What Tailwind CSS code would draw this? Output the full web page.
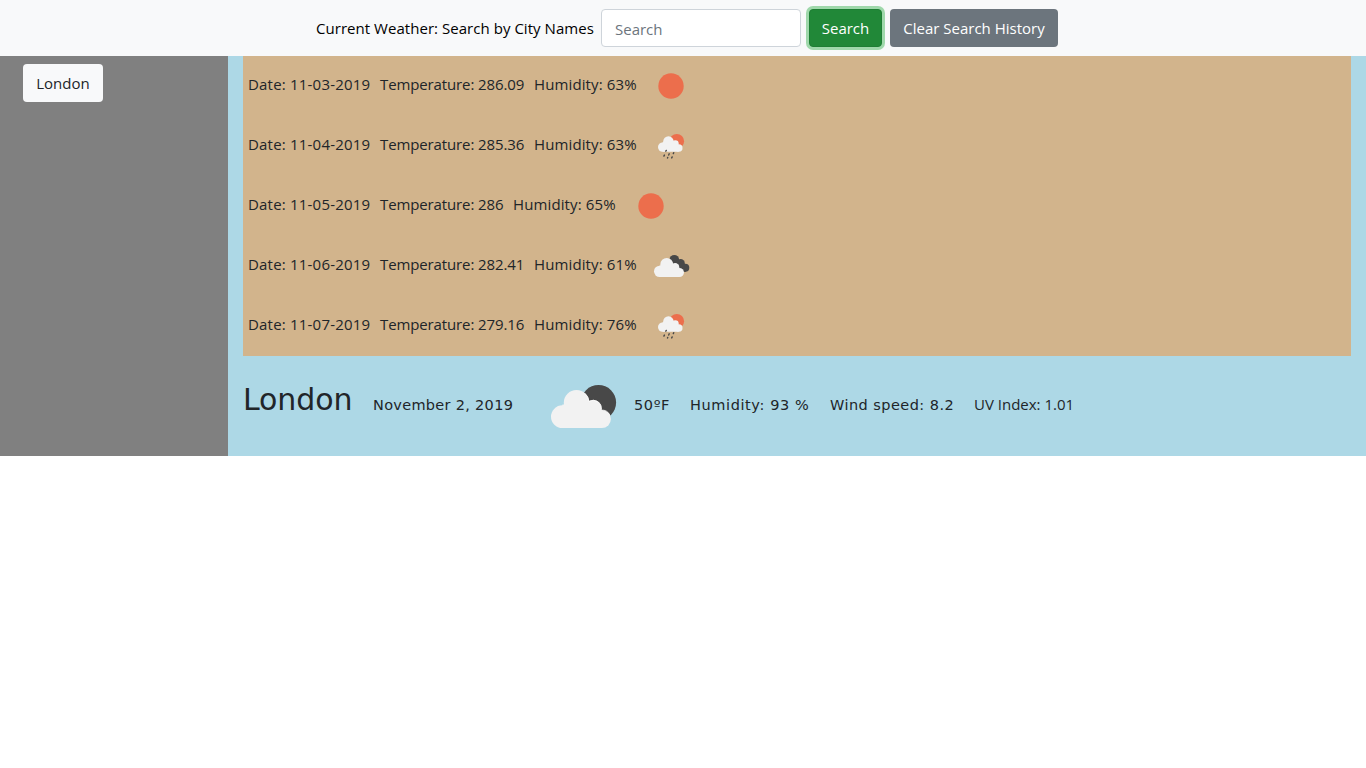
<!DOCTYPE html>
<html lang="en">
<head>
<meta charset="utf-8">
<title>Weather Dashboard</title>
<script src="https://cdn.jsdelivr.net/npm/@tailwindcss/browser@4"></script>
</head>
<body class="bg-white text-[#212529] font-['Open_Sans','Noto_Sans',sans-serif] text-[15px] leading-6 whitespace-nowrap">
<svg class="hidden">
  <symbol id="sun" viewBox="0 0 50 50"><circle cx="25" cy="25" r="12.7" fill="#ec6e4c"/></symbol>
  <symbol id="cloud" viewBox="0 0 100 100">
    <g fill="#f2f2f2">
      <circle cx="28.4" cy="60.7" r="11.4"/><circle cx="42.5" cy="46.7" r="12.7"/>
      <circle cx="59.2" cy="52.5" r="8.4"/><circle cx="67.8" cy="63" r="9.1"/>
      <path d="M28.4 48.5H52L64 54L68 72.1H28.4Z"/>
    </g>
  </symbol>
  <symbol id="rain" viewBox="0 0 50 50">
    <circle cx="30.8" cy="20.2" r="7.3" fill="#ec6e4c"/>
    <use href="#cloud" x="5" y="1.2" width="41" height="41"/>
    <path d="M20.3 29.4l-.5 .8M18.4 34.1l-.5 1M23.2 32.8l-.5 1.2M27.7 31.7l-.4 .9M21.7 36.5l-.2 .5M26.2 35.9l-.5 1" stroke="#484848" stroke-width="1.4" stroke-linecap="round"/>
  </symbol>
  <symbol id="broken" viewBox="0 0 50 50">
    <g fill="#484848"><circle cx="28.3" cy="18.7" r="4.8"/><circle cx="34.6" cy="22.3" r="4.2"/><circle cx="39.3" cy="26.8" r="4"/><path d="M28 18L37 20L40 30.7H36L27 23Z"/></g>
    <use href="#cloud" x="-.5" y="0" width="50" height="50"/>
  </symbol>
</svg>
<nav class="h-14 bg-[#f8f9fa] flex items-center pl-[316px]">
  <span class="w-[285px] text-black tracking-[0.04px]">Current Weather: Search by City Names</span>
  <input type="text" placeholder="Search" class="w-[200px] h-[38px] pl-[13px] pr-3 pt-1 pb-0.5 rounded border border-[#ced4da] bg-white placeholder:text-[#6c757d]">
  <button class="ml-2 w-[73px] h-[38px] rounded bg-[#218838] border border-[#1e7e34] text-white shadow-[0_0_0_3px_#9fd8ab]">Search</button>
  <button class="ml-2 w-[168px] h-[38px] rounded bg-[#6c757d] text-white">Clear Search History</button>
</nav>
<div class="flex h-[400px]">
  <aside class="w-[228px] bg-[#808080] pt-2 pl-[23px]">
    <button class="w-20 h-[38px] rounded bg-[#f8f9fa]">London</button>
  </aside>
  <main class="flex-1 bg-[#add8e6] px-[15px]">
    <section class="bg-[#d2b48c] h-[300px]">
      <div class="h-[60px] flex items-center pl-[5px]"><span class="w-[132px] pb-1 tracking-[0.2px]">Date: 11-03-2019</span><span class="w-[154px] pb-1 tracking-[-0.12px]">Temperature: 286.09</span><span class="w-[112px] pb-1 tracking-[0.12px]">Humidity: 63%</span><svg class="size-[50px]"><use href="#sun"/></svg></div>
      <div class="h-[60px] flex items-center pl-[5px]"><span class="w-[132px] pb-1 tracking-[0.2px]">Date: 11-04-2019</span><span class="w-[154px] pb-1 tracking-[-0.12px]">Temperature: 285.36</span><span class="w-[112px] pb-1 tracking-[0.12px]">Humidity: 63%</span><svg class="size-[50px]"><use href="#rain"/></svg></div>
      <div class="h-[60px] flex items-center pl-[5px]"><span class="w-[132px] pb-1 tracking-[0.2px]">Date: 11-05-2019</span><span class="w-[133px] pb-1 tracking-[-0.12px]">Temperature: 286</span><span class="w-[113px] pb-1 tracking-[0.12px]">Humidity: 65%</span><svg class="size-[50px]"><use href="#sun"/></svg></div>
      <div class="h-[60px] flex items-center pl-[5px]"><span class="w-[132px] pb-1 tracking-[0.2px]">Date: 11-06-2019</span><span class="w-[154px] pb-1 tracking-[-0.12px]">Temperature: 282.41</span><span class="w-[112px] pb-1 tracking-[0.12px]">Humidity: 61%</span><svg class="size-[50px]"><use href="#broken"/></svg></div>
      <div class="h-[60px] flex items-center pl-[5px]"><span class="w-[132px] pb-1 tracking-[0.2px]">Date: 11-07-2019</span><span class="w-[154px] pb-1 tracking-[-0.12px]">Temperature: 279.16</span><span class="w-[112px] pb-1 tracking-[0.12px]">Humidity: 76%</span><svg class="size-[50px]"><use href="#rain"/></svg></div>
    </section>
    <section class="h-[100px] flex items-center font-['DejaVu_Sans',sans-serif] text-[14.5px]">
      <h1 class="w-[130px] text-[30px] pb-3 tracking-[-0.1px]">London</h1>
      <span class="w-[161px] pb-0.5 tracking-[0.3px]">November 2, 2019</span>
      <svg class="size-[100px]" viewBox="0 0 100 100">
        <circle cx="64.5" cy="46.6" r="17.6" fill="#484848"/>
        <use href="#cloud" width="100" height="100"/>
        <path d="M50.8 37.2Q54.6 40.6 55 45.4A8.2 8.2 0 0 1 67.2 54.1A9 9 0 0 1 76 59.5" fill="none" stroke="#fff" stroke-width=".8"/>
      </svg>
      <span class="w-[56px] pb-0.5 tracking-[0.6px]">50ºF</span>
      <span class="w-[140px] pb-0.5 tracking-[0.6px]">Humidity: 93 %</span>
      <span class="w-[144px] pb-0.5 tracking-[0.45px]">Wind speed: 8.2</span>
      <span class="pb-1 text-[15px] font-['Open_Sans','Noto_Sans',sans-serif]">UV Index: 1.01</span>
    </section>
  </main>
</div>
</body>
</html>
